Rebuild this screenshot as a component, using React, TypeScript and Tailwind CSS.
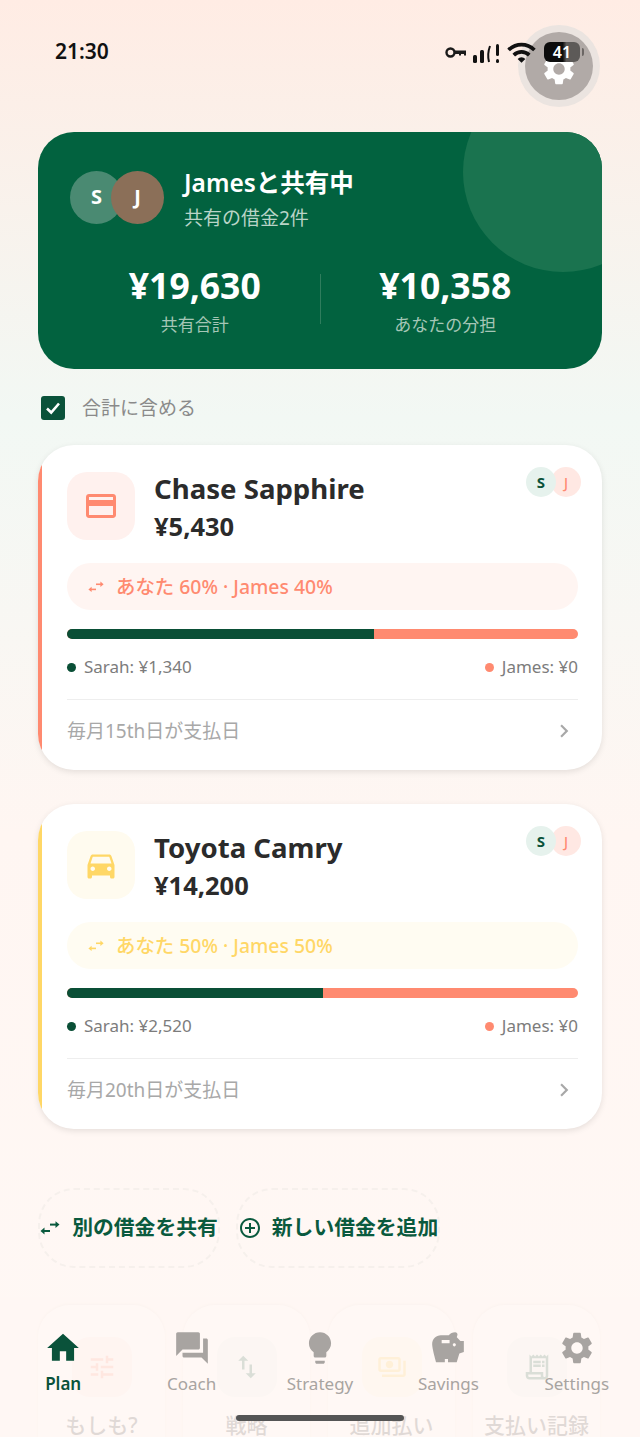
import React from 'react';
import {
  MdAddCircleOutline,
  MdChevronRight,
  MdCreditCard,
  MdDirectionsCar,
  MdForum,
  MdHome,
  MdLightbulb,
  MdOutlinePayments,
  MdOutlineReceiptLong,
  MdSavings,
  MdSettings,
  MdSwapVert,
  MdTune,
  MdWifi,
} from 'react-icons/md';

const FONT = "font-['Noto_Sans','Noto_Sans_CJK_JP',sans-serif]";

// two short offset arrows, top one going right and bottom one going left
function ShareArrows({ className }: { className?: string }) {
  return (
    <svg className={className} viewBox="0 0 20 14" fill="currentColor">
      <rect x="10" y="2.6" width="7" height="2" />
      <path d="M15.5 0.2 L19.5 3.6 L15.5 7 Z" />
      <rect x="3" y="9" width="7" height="2" />
      <path d="M4.5 6.6 L0.5 10 L4.5 13.4 Z" />
    </svg>
  );
}

function StatusBar() {
  return (
    <div className="absolute left-0 top-0 z-30 h-[110px] w-full">
      {/* settings button under the clock row */}
      <div className="absolute left-[518px] top-[25px] flex h-[82px] w-[82px] items-center justify-center rounded-full bg-[#ebe4e0]">
        <div className="flex h-[68px] w-[68px] items-center justify-center rounded-full bg-[#b1aaa7] pt-[5px]">
          <MdSettings className="h-[38px] w-[38px] text-white" />
        </div>
      </div>
      <span className="absolute left-[55px] top-[37px] text-[21px] leading-[28px] font-semibold text-[#111]">21:30</span>
      <svg className="absolute left-[445px] top-[46px]" width="22" height="14" viewBox="0 0 22 14" fill="none">
        <circle cx="5.5" cy="6.5" r="4" stroke="#1a1a1a" strokeWidth="2.4" />
        <path d="M10 4.5 H21 V9.5 H19 V8 H16 V9.5 H14 V8 H10 Z" fill="#1a1a1a" />
      </svg>
      <svg className="absolute left-[472px] top-[42px]" width="30" height="22" viewBox="0 0 30 22">
        <rect x="1" y="13" width="4" height="8" rx="1.5" fill="#111" />
        <rect x="8" y="8" width="4" height="13" rx="1.5" fill="#111" />
        <path d="M18 4 Q15 12 17 20" stroke="#111" strokeWidth="2" fill="none" />
        <rect x="24" y="2" width="3" height="12" rx="1.5" fill="#111" />
        <rect x="24" y="17" width="3" height="4" rx="1.5" fill="#111" />
      </svg>
      <MdWifi className="absolute left-[506px] top-[37px] h-[31px] w-[31px] text-[#111]" />
      <div className="absolute left-[544px] top-[42px] flex h-[20px] w-[36px] items-center justify-center rounded-[6px] bg-[linear-gradient(90deg,#0c0c0c_0%,#0c0c0c_52%,#5d5a58_62%,#5d5a58_100%)]">
        <span className="text-[16px] leading-none font-semibold text-white">41</span>
      </div>
      <div className="absolute left-[582px] top-[48px] h-[8px] w-[2px] rounded-r bg-[#6b6664]" />
    </div>
  );
}

function Hero() {
  return (
    <div className="relative h-[237px] w-full shrink-0 overflow-hidden rounded-[36px] bg-[#02623f] px-[32px] pt-[31px]">
      <div className="absolute right-[-61px] top-[-60px] h-[200px] w-[200px] rounded-full bg-[#1a734f]" />
      <div className="relative flex items-center">
        <div className="flex">
          <div className="flex h-[53px] w-[53px] items-center justify-center rounded-full bg-[#4a8a72] text-[20px] font-bold text-white">S</div>
          <div className="ml-[-12px] flex h-[53px] w-[53px] items-center justify-center rounded-full bg-[#8b6f58] text-[20px] font-bold text-white">J</div>
        </div>
        <div className="ml-[20px] flex flex-col pt-[4px]">
          <span className="text-[24.5px] leading-[32px] font-semibold text-white">Jamesと共有中</span>
          <span className="mt-[6px] text-[19px] leading-[26px] text-[#b9d4c7]">共有の借金2件</span>
        </div>
      </div>
      <div className="relative mt-[30px] flex items-center">
        <div className="flex flex-1 flex-col items-center">
          <span className="text-[35.5px] leading-[48px] font-bold text-white">¥19,630</span>
          <span className="mt-[5px] text-[17px] leading-[22px] text-[#a5c6b6]">共有合計</span>
        </div>
        <div className="h-[50px] w-px bg-[#2f7d5d]" />
        <div className="flex flex-1 flex-col items-center">
          <span className="text-[35.5px] leading-[48px] font-bold text-white">¥10,358</span>
          <span className="mt-[5px] text-[17px] leading-[22px] text-[#a5c6b6]">あなたの分担</span>
        </div>
      </div>
    </div>
  );
}

type Debt = {
  name: string;
  amount: string;
  icon: React.ReactNode;
  edge: string;
  iconBg: string;
  pillBg: string;
  pillText: string;
  share: string;
  bar: string;
  sarah: string;
  due: string;
};

const debts: Debt[] = [
  {
    name: 'Chase Sapphire',
    amount: '¥5,430',
    icon: <MdCreditCard className="h-[36px] w-[36px] text-[#ff8a70]" />,
    edge: 'bg-[#ff8a70]',
    iconBg: 'bg-[#fff1ee]',
    pillBg: 'bg-[#fff5f2]',
    pillText: 'text-[#ff8a70]',
    share: 'あなた 60% · James 40%',
    bar: 'w-[60%]',
    sarah: 'Sarah: ¥1,340',
    due: '毎月15th日が支払日',
  },
  {
    name: 'Toyota Camry',
    amount: '¥14,200',
    icon: <MdDirectionsCar className="h-[36px] w-[36px] text-[#ffd766]" />,
    edge: 'bg-[#ffd766]',
    iconBg: 'bg-[#fffbef]',
    pillBg: 'bg-[#fffcf2]',
    pillText: 'text-[#ffd766]',
    share: 'あなた 50% · James 50%',
    bar: 'w-[50%]',
    sarah: 'Sarah: ¥2,520',
    due: '毎月20th日が支払日',
  },
];

function DebtCard({ debt }: { debt: Debt }) {
  return (
    <div className="relative flex h-[325px] w-full shrink-0 overflow-hidden rounded-[36px] bg-white shadow-[0_2px_6px_rgba(0,0,0,0.1)]">
      <div className={`w-[4px] shrink-0 ${debt.edge}`} />
      <div className="min-w-0 flex-1 pl-[25px] pr-[24px] pt-[27px]">
        <div className="absolute right-[21px] top-[22px] flex">
          <div className="z-10 flex h-[30px] w-[30px] items-center justify-center rounded-full bg-[#e6f2ed] text-[15px] font-bold text-[#0a523a]">S</div>
          <div className="ml-[-5px] flex h-[30px] w-[30px] items-center justify-center rounded-full bg-[#ffe8e3] text-[14px] font-medium text-[#ff8a70]">J</div>
        </div>
        <div className="flex">
          <div className={`flex h-[68px] w-[68px] items-center justify-center rounded-[20px] ${debt.iconBg}`}>{debt.icon}</div>
          <div className="ml-[19px] flex flex-col">
            <span className="text-[27.6px] leading-[32px] font-bold text-[#2b2b2b]">{debt.name}</span>
            <span className="mt-[6px] text-[25.5px] leading-[32px] font-bold text-[#2b2b2b]">{debt.amount}</span>
          </div>
        </div>
        <div className={`mt-[21px] flex h-[47px] items-center rounded-full pl-[21px] ${debt.pillBg} ${debt.pillText}`}>
          <ShareArrows className="h-[12px] w-[16px]" />
          <span className="ml-[12px] text-[19.4px] font-medium">{debt.share}</span>
        </div>
        <div className="mt-[19px] flex h-[10px] overflow-hidden rounded-full bg-[#ff8a70]">
          <div className={`h-full bg-[#0a4f36] ${debt.bar}`} />
        </div>
        <div className="mt-[16px] flex items-center justify-between text-[17px] leading-[24px] text-[#7c7c7c]">
          <div className="flex items-center gap-[8px]">
            <span className="h-[9px] w-[9px] rounded-full bg-[#0a4f36]" />
            <span>{debt.sarah}</span>
          </div>
          <div className="flex items-center gap-[8px]">
            <span className="h-[9px] w-[9px] rounded-full bg-[#ff8a70]" />
            <span>James: ¥0</span>
          </div>
        </div>
        <div className="mt-[20px] flex h-[63px] items-center justify-between border-t border-[#eeeeee]">
          <span className="text-[19px] text-[#a8a8a8]">{debt.due}</span>
          <MdChevronRight className="mr-[1px] h-[26px] w-[26px] text-[#a8a8a8]" />
        </div>
      </div>
    </div>
  );
}

const tiles = [
  { label: 'もしも?', icon: <MdTune className="h-[30px] w-[30px] text-[#ff8a70]" />, bg: 'bg-[#ffe9e3]' },
  { label: '戦略', icon: <MdSwapVert className="h-[30px] w-[30px] text-[#0a523a]" />, bg: 'bg-[#e6f2ed]' },
  { label: '追加払い', icon: <MdOutlinePayments className="h-[30px] w-[30px] text-[#ffc93c]" />, bg: 'bg-[#fff6dc]' },
  { label: '支払い記録', icon: <MdOutlineReceiptLong className="h-[30px] w-[30px] text-[#0a523a]" />, bg: 'bg-[#e6f2ed]' },
];

const navItems = [
  { label: 'Plan', icon: MdHome, active: true },
  { label: 'Coach', icon: MdForum, active: false },
  { label: 'Strategy', icon: MdLightbulb, active: false },
  { label: 'Savings', icon: MdSavings, active: false },
  { label: 'Settings', icon: MdSettings, active: false },
];

export default function App() {
  return (
    <div className={`relative h-[1437px] w-[640px] overflow-hidden bg-[linear-gradient(180deg,#ffece4_0%,#f2f8f4_29%,#fff6f2_58%,#fff8f5_100%)] ${FONT}`}>
      <StatusBar />
      <div className="flex flex-col px-[38px] pt-[132px]">
        <Hero />
        <div className="mt-[26px] flex items-center pl-[3px]">
          <div className="flex h-[24px] w-[24px] items-center justify-center rounded-[3px] bg-[#0a523a]">
            <svg width="18" height="18" viewBox="0 0 18 18" fill="none">
              <path d="M3 9.5 L7.2 13.5 L15 4.5" stroke="white" strokeWidth="2.6" />
            </svg>
          </div>
          <span className="ml-[17px] text-[19px] leading-[26px] text-[#8a8a8a]">合計に含める</span>
        </div>
        <div className="mt-[24px] flex flex-col gap-[34px]">
          {debts.map((debt) => (
            <DebtCard key={debt.name} debt={debt} />
          ))}
        </div>
        <div className="mt-[59px] flex gap-[16px]">
          <div className="flex h-[80px] w-[182px] items-center justify-center gap-[12px] rounded-[36px] border-2 border-dashed border-[#f6f0ec] text-[20.8px] font-bold text-[#0a5a3e]">
            <ShareArrows className="h-[14px] w-[20px] shrink-0" />
            <span className="whitespace-nowrap">別の借金を共有</span>
          </div>
          <div className="flex h-[80px] w-[204px] items-center justify-center gap-[10px] rounded-[36px] border-2 border-dashed border-[#f6f0ec] text-[20.8px] font-bold text-[#0a5a3e]">
            <MdAddCircleOutline className="h-[24px] w-[24px] shrink-0" />
            <span className="whitespace-nowrap">新しい借金を追加</span>
          </div>
        </div>
        <div className="mt-[37px] flex gap-[18px]">
          {tiles.map((tile) => (
            <div key={tile.label} className="flex h-[170px] w-[127px] shrink-0 flex-col items-center rounded-[32px] bg-white pt-[32px] shadow-[0_-1px_3px_rgba(0,0,0,0.12)]">
              <div className={`flex h-[60px] w-[60px] items-center justify-center rounded-[18px] ${tile.bg}`}>{tile.icon}</div>
              <span className="mt-[13px] text-[21px] leading-[30px] whitespace-nowrap font-medium text-[#333]">{tile.label}</span>
            </div>
          ))}
        </div>
      </div>
      {/* translucent bottom nav sits over the tiles */}
      <nav className="absolute bottom-0 left-0 z-20 h-[140px] w-full bg-[#fff7f3]/85 pt-[32px]">
        <div className="ml-[-1px] grid w-[642px] grid-cols-5">
          {navItems.map((item) => {
            const Icon = item.icon;
            return (
              <div key={item.label} className={`flex flex-col items-center ${item.active ? 'text-[#0a523a]' : 'text-[#a8a4a1]'}`}>
                <Icon className="h-[38px] w-[38px]" />
                <span className={`mt-[5px] text-[17px] leading-[24px] ${item.active ? 'font-semibold' : ''}`}>{item.label}</span>
              </div>
            );
          })}
        </div>
        <div className="absolute left-[236px] top-[118px] h-[6px] w-[168px] rounded-full bg-[#555]" />
      </nav>
    </div>
  );
}
